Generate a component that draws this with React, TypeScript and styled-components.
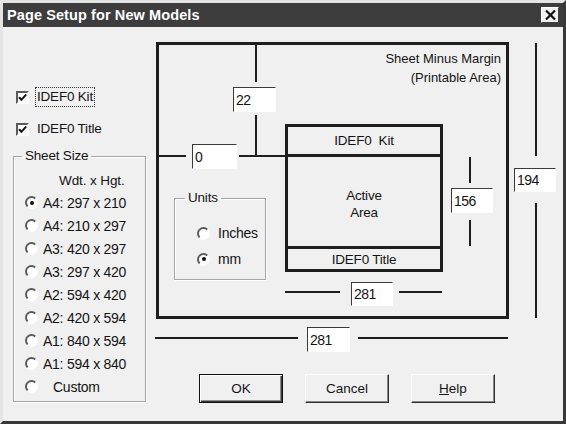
import React from "react";
import styled, { createGlobalStyle, css } from "styled-components";

const GlobalStyle = createGlobalStyle`
  html, body { margin: 0; padding: 0; background: #f0f0f0; }
  body { font-family: "Liberation Sans", Arial, sans-serif; }
`;

const ink = "#1e1e1e";

const Window = styled.div`
  width: 566px;
  height: 424px;
  box-sizing: border-box;
  border: 3px solid;
  border-color: #e4e4e4 #383838 #383838 #e4e4e4;
  background: #f0f0f0;
  display: flex;
  flex-direction: column;
  overflow: hidden;
  color: #141414;
  font-family: "Liberation Sans", Arial, sans-serif;
  font-size: 13px;
`;

const TitleBar = styled.div`
  height: 24px;
  flex: none;
  background: #3d3d3d;
  color: #fff;
  display: flex;
  align-items: center;
  justify-content: space-between;
  padding: 0 4px;
`;

const Title = styled.span`
  font-weight: bold;
  font-size: 14.5px;
  letter-spacing: 0.1px;
`;

const CloseButton = styled.button`
  width: 18px;
  height: 16px;
  padding: 0;
  box-sizing: border-box;
  background: #f0f0f0;
  border: 1px solid;
  border-color: #fff #404040 #404040 #fff;
  display: flex;
  align-items: center;
  justify-content: center;
`;

const Body = styled.div`
  flex: 1;
  display: flex;
`;

const LeftPane = styled.div`
  width: 150px;
  flex: none;
  box-sizing: border-box;
  padding: 60px 0 0 13px;
  display: flex;
  flex-direction: column;
`;

const CheckRow = styled.label`
  display: flex;
  align-items: center;
  height: 20px;
  gap: 6px;
  & + & { margin-top: 12px; }
`;

const CheckBox = styled.span`
  width: 13px;
  height: 13px;
  box-sizing: border-box;
  border: 2px solid;
  border-color: #5a5a5a #fff #fff #5a5a5a;
  background: #fff;
  display: flex;
  align-items: center;
  justify-content: center;
`;

const CheckLabel = styled.span<{ $focused?: boolean }>`
  height: 20px;
  box-sizing: border-box;
  line-height: 18px;
  padding: 0 1px;
  border: 1px dotted ${p => (p.$focused ? "#333" : "transparent")};
  font-size: 13.5px;
  letter-spacing: -0.2px;
`;

const Group = styled.fieldset<{ $w: number }>`
  margin: 0;
  padding: 0;
  width: ${p => p.$w}px;
  box-sizing: border-box;
  border: 1px solid #a6a6a6;
  box-shadow: inset 1px 1px 0 #fff, 1px 1px 0 #fff;
  min-inline-size: 0;
`;

const SheetGroup = styled(Group)`
  margin: 10px 0 0 -3px;
  height: 253px;
`;

const Legend = styled.legend<{ $indent: number }>`
  margin-left: ${p => p.$indent}px;
  padding: 0 3px;
  line-height: 14px;
  font-size: 13.5px;
  letter-spacing: -0.2px;
`;

const SizeList = styled.div`
  padding: 7px 0 0 11px;
  display: flex;
  flex-direction: column;
`;

const ListHeader = styled.div`
  height: 21px;
  line-height: 21px;
  margin-left: 34px;
  font-size: 13.5px;
  letter-spacing: -0.1px;
`;

const RadioRow = styled.label<{ $h: number; $gap: number }>`
  display: flex;
  align-items: center;
  height: ${p => p.$h}px;
  gap: ${p => p.$gap}px;
  font-size: 14px;
  letter-spacing: -0.25px;
`;

const RadioCircle = styled.span<{ $checked?: boolean }>`
  width: 13px;
  height: 13px;
  box-sizing: border-box;
  border-radius: 50%;
  border: 2px solid;
  border-color: #5a5a5a #fff #fff #5a5a5a;
  background: #fff;
  display: flex;
  align-items: center;
  justify-content: center;
  &::after {
    content: "";
    width: 4px;
    height: 4px;
    border-radius: 50%;
    background: ${p => (p.$checked ? "#111" : "transparent")};
  }
`;

const RadioText = styled.span<{ $indent?: number }>`
  padding-left: ${p => p.$indent || 0}px;
`;

const RightPane = styled.div`
  flex: 1;
  display: flex;
  flex-direction: column;
`;

const Canvas = styled.div`
  position: relative;
  width: 409px;
  height: 340px;
  flex: none;
`;

type Box = { $x: number; $y: number; $w: number; $h: number };

const placed = css<Box>`
  position: absolute;
  left: ${p => p.$x}px;
  top: ${p => p.$y}px;
  width: ${p => p.$w}px;
  height: ${p => p.$h}px;
  box-sizing: border-box;
`;

const Line = styled.span<Box>`
  ${placed};
  background: ${ink};
`;

const ValueBox = styled.input<Box>`
  ${placed};
  margin: 0;
  padding: 0 0 0 2px;
  border: 1px solid;
  border-color: #3a3a3a #fff #fff #3a3a3a;
  background: #fff;
  font-family: "Liberation Sans", Arial, sans-serif;
  font-size: 14px;
  letter-spacing: -0.5px;
  color: #141414;
  outline: none;
`;

const OuterRect = styled.div<Box>`
  ${placed};
  border: 3px solid ${ink};
`;

const Caption = styled.div`
  text-align: right;
  padding: 4px 5px 0 0;
  line-height: 19px;
  font-size: 13px;
`;

const InnerRect = styled.div<Box>`
  ${placed};
  border: 3px solid ${ink};
  display: flex;
  flex-direction: column;
`;

const Band = styled.div<{ $h?: number; $sep?: boolean }>`
  ${p => (p.$h ? `height: ${p.$h}px; flex: none;` : "flex: 1; padding-top: 4px;")}
  box-sizing: border-box;
  border-bottom: ${p => (p.$sep ? `3px solid ${ink}` : "none")};
  display: flex;
  align-items: center;
  justify-content: center;
  text-align: center;
  line-height: 17px;
  font-size: 13.5px;
  letter-spacing: -0.2px;
`;

const UnitsGroup = styled(Group)<Box>`
  ${placed};
`;

const UnitsList = styled.div`
  padding: 15px 0 0 22px;
  display: flex;
  flex-direction: column;
`;

const ButtonRow = styled.div`
  display: flex;
  gap: 22px;
  padding: 7px 0 0 46px;
`;

const Button = styled.button<{ $default?: boolean }>`
  width: 84px;
  height: 29px;
  padding: 0;
  box-sizing: border-box;
  background: #f0f0f0;
  font-family: "Liberation Sans", Arial, sans-serif;
  font-size: 13.5px;
  color: #141414;
  border: 1px solid;
  ${p =>
    p.$default
      ? css`
          border-color: #111;
          box-shadow: inset 1px 1px 0 #fff, inset -1px -1px 0 #3a3a3a, inset -2px -2px 0 #8a8a8a;
        `
      : css`
          border-color: #fff #2e2e2e #2e2e2e #fff;
          box-shadow: inset -1px -1px 0 #8a8a8a;
        `}
`;

const sizes = [
  "A4: 297 x 210",
  "A4: 210 x 297",
  "A3: 420 x 297",
  "A3: 297 x 420",
  "A2: 594 x 420",
  "A2: 420 x 594",
  "A1: 840 x 594",
  "A1: 594 x 840",
];

const lines: [number, number, number, number][] = [
  [102, 15, 2, 40],
  [102, 88, 2, 40],
  [3, 128, 30, 2],
  [86, 128, 46, 2],
  [132, 264, 55, 2],
  [246, 264, 43, 2],
  [316, 130, 2, 26],
  [316, 193, 2, 26],
  [382, 16, 2, 113],
  [382, 176, 2, 115],
  [2, 310, 143, 2],
  [205, 310, 150, 2],
];

const fields: { v: string; b: [number, number, number, number] }[] = [
  { v: "22", b: [80, 60, 43, 25] },
  { v: "0", b: [39, 117, 45, 25] },
  { v: "281", b: [198, 255, 42, 24] },
  { v: "156", b: [298, 161, 42, 25] },
  { v: "194", b: [361, 141, 42, 24] },
  { v: "281", b: [154, 300, 43, 25] },
];

const Check = () => (
  <svg width="9" height="9" viewBox="0 0 9 9">
    <path d="M1 4.2 L3.4 6.8 L8.2 1.4" fill="none" stroke="#111" strokeWidth="2" />
  </svg>
);

export default function App() {
  return (
    <>
      <GlobalStyle />
      <Window>
        <TitleBar>
          <Title>Page Setup for New Models</Title>
          <CloseButton aria-label="Close">
            <svg width="11" height="10" viewBox="0 0 11 10">
              <path d="M1 0.5 L10 9.5 M10 0.5 L1 9.5" stroke="#111" strokeWidth="2.2" />
            </svg>
          </CloseButton>
        </TitleBar>
        <Body>
          <LeftPane>
            <CheckRow>
              <CheckBox>
                <Check />
              </CheckBox>
              <CheckLabel $focused>IDEF0 Kit</CheckLabel>
            </CheckRow>
            <CheckRow>
              <CheckBox>
                <Check />
              </CheckBox>
              <CheckLabel>IDEF0 Title</CheckLabel>
            </CheckRow>
            <SheetGroup $w={133}>
              <Legend $indent={8}>Sheet Size</Legend>
              <SizeList>
                <ListHeader>Wdt. x Hgt.</ListHeader>
                {sizes.map((s, i) => (
                  <RadioRow key={i} $h={23} $gap={5}>
                    <RadioCircle $checked={i === 0} />
                    <RadioText>{s}</RadioText>
                  </RadioRow>
                ))}
                <RadioRow $h={23} $gap={5}>
                  <RadioCircle />
                  <RadioText $indent={10}>Custom</RadioText>
                </RadioRow>
              </SizeList>
            </SheetGroup>
          </LeftPane>
          <RightPane>
            <Canvas>
              <OuterRect $x={3} $y={15} $w={353} $h={277}>
                <Caption>
                  Sheet Minus Margin
                  <br />
                  (Printable Area)
                </Caption>
              </OuterRect>
              <InnerRect $x={132} $y={97} $w={158} $h={148}>
                <Band $h={30} $sep>IDEF0&nbsp; Kit</Band>
                <Band $sep>
                  Active
                  <br />
                  Area
                </Band>
                <Band $h={20}>IDEF0 Title</Band>
              </InnerRect>
              {lines.map(([x, y, w, h], i) => (
                <Line key={i} $x={x} $y={y} $w={w} $h={h} />
              ))}
              {fields.map((f, i) => (
                <ValueBox
                  key={i}
                  readOnly
                  value={f.v}
                  $x={f.b[0]}
                  $y={f.b[1]}
                  $w={f.b[2]}
                  $h={f.b[3]}
                />
              ))}
              <UnitsGroup $w={92} $x={21} $y={164} $h={89}>
                <Legend $indent={10}>Units</Legend>
                <UnitsList>
                  <RadioRow $h={26} $gap={8}>
                    <RadioCircle />
                    <RadioText>Inches</RadioText>
                  </RadioRow>
                  <RadioRow $h={26} $gap={8}>
                    <RadioCircle $checked />
                    <RadioText>mm</RadioText>
                  </RadioRow>
                </UnitsList>
              </UnitsGroup>
            </Canvas>
            <ButtonRow>
              <Button $default>OK</Button>
              <Button>Cancel</Button>
              <Button>
                <u>H</u>elp
              </Button>
            </ButtonRow>
          </RightPane>
        </Body>
      </Window>
    </>
  );
}
